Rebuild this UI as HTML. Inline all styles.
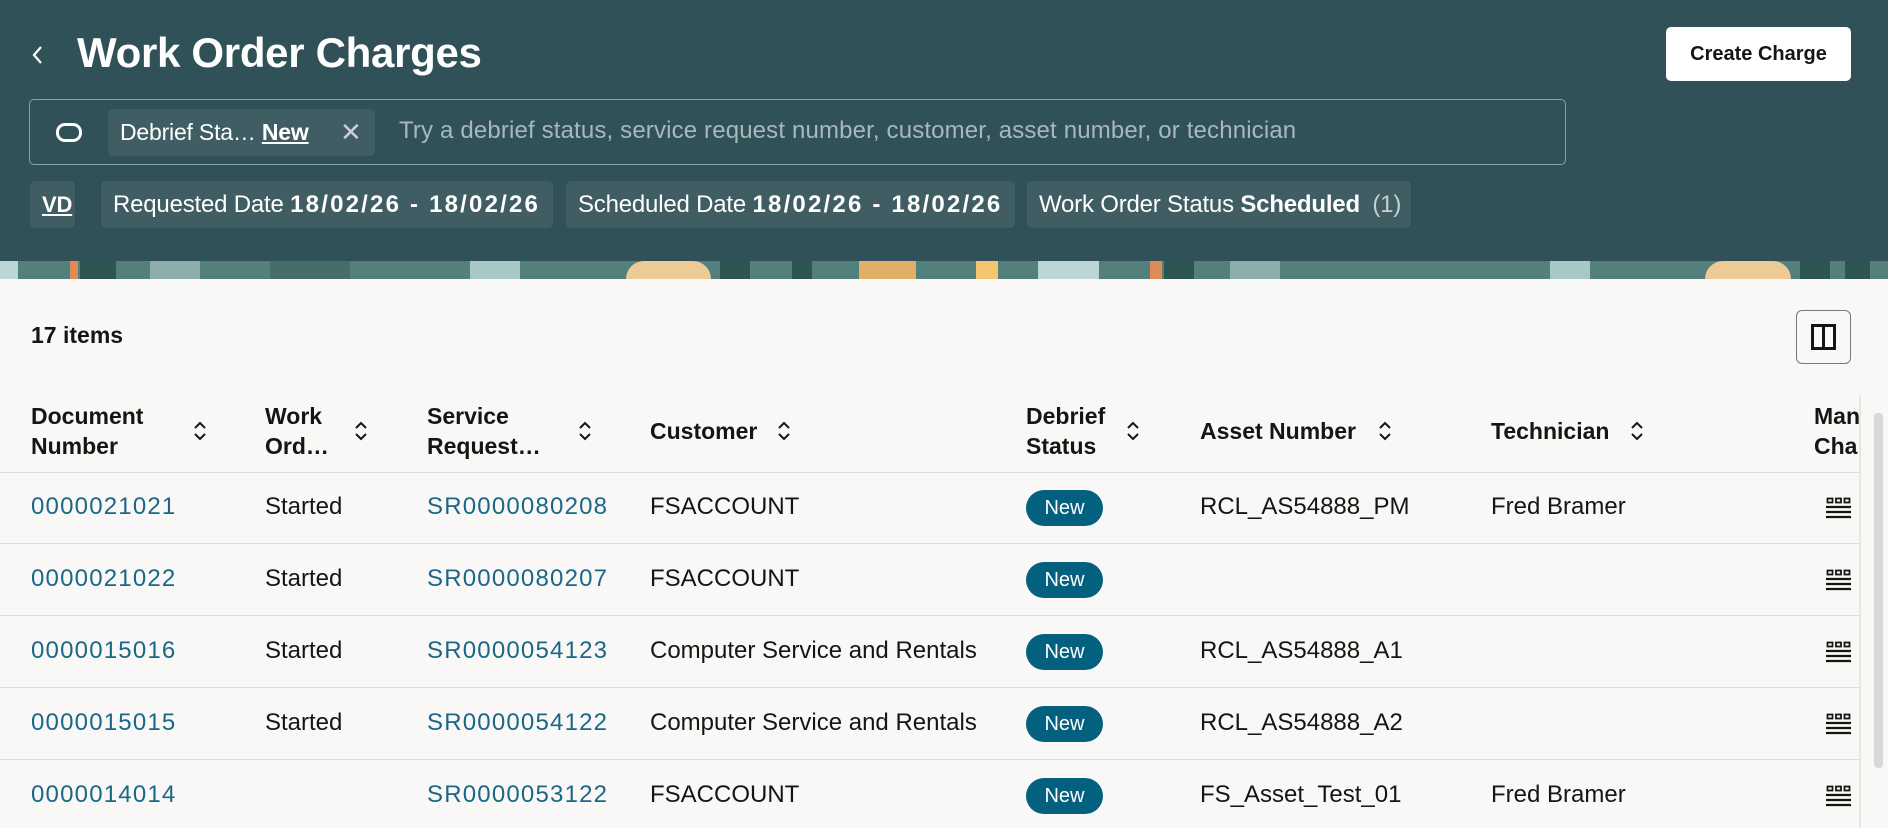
<!DOCTYPE html>
<html><head><meta charset="utf-8"><style>
*{box-sizing:border-box;margin:0;padding:0}
body{width:1888px;height:828px;overflow:hidden;background:#f9f8f6;font-family:"Liberation Sans",sans-serif;position:relative;color:#161513}
.hdr{position:absolute;left:0;top:0;width:1888px;height:261px;background:#315158}
.band{position:absolute;left:0;top:261px;width:1888px;height:18px;background:#53807d;overflow:hidden}
.band div{position:absolute;top:0;height:18px}
.abs{position:absolute}
.title{left:77px;top:29px;font-size:42px;font-weight:bold;color:#fff;letter-spacing:-0.3px}
.btn{left:1666px;top:27px;width:185px;height:54px;background:#fff;border-radius:5px;font-size:20px;color:#161513;text-align:center;line-height:54px;font-weight:bold}
.search{left:29px;top:99px;width:1537px;height:66px;border:1px solid #8aa0a3;border-radius:5px}
.chip{background:#3f5d62;border-radius:5px;color:#fff;font-size:24px;height:47px;line-height:47px;padding:0 12px;white-space:nowrap;letter-spacing:-0.2px}
.chip b.d{letter-spacing:2.2px}
.th{font-size:23px;font-weight:bold;line-height:30px}
.td{font-size:24px;position:absolute}
.lnk{color:#1a6788;letter-spacing:1.2px}
.line{position:absolute;left:0;width:1860px;height:1px;background:#dedcda}
.badge{position:absolute;left:1026px;width:77px;height:36px;border-radius:18px;background:#04607f;color:#fff;font-size:20px;text-align:center;line-height:36px}
.sort{position:absolute;width:14px;height:22px}
.grid{position:absolute;left:1826px;width:25px;height:22px}
</style></head><body>
<div class="hdr"></div>
<div class="band">
<div style="left:0;width:18px;background:#bcd5d6"></div>
<div style="left:70px;width:8px;background:#e08a55"></div>
<div style="left:80px;width:36px;background:#2f5553"></div>
<div style="left:150px;width:50px;background:#8eaeab"></div>
<div style="left:270px;width:80px;background:#476d69"></div>
<div style="left:470px;width:50px;background:#a8c7c7"></div>
<div style="left:626px;width:85px;background:#edca96;border-radius:20px 20px 0 0"></div>
<div style="left:720px;width:30px;background:#2f5553"></div>
<div style="left:792px;width:20px;background:#2f5553"></div>
<div style="left:859px;width:57px;background:#e0b068"></div>
<div style="left:976px;width:22px;background:#f3c670"></div>
<div style="left:1038px;width:61px;background:#bcd5d6"></div>
<div style="left:1150px;width:12px;background:#e08a55"></div>
<div style="left:1164px;width:30px;background:#2f5553"></div>
<div style="left:1230px;width:50px;background:#8eaeab"></div>
<div style="left:1550px;width:40px;background:#a8c7c7"></div>
<div style="left:1705px;width:86px;background:#edca96;border-radius:20px 20px 0 0"></div>
<div style="left:1800px;width:30px;background:#2f5553"></div>
<div style="left:1845px;width:25px;background:#2f5553"></div>
</div>
<svg class="abs" style="left:30px;top:44px" width="16" height="22"><path d="M11 3 L4 11 L11 19" stroke="#fff" stroke-width="2.2" fill="none"/></svg>
<div class="abs title">Work Order Charges</div>
<div class="abs btn">Create Charge</div>
<div class="abs search"></div>
<div class="abs" style="left:56px;top:123px;width:26px;height:19px;border:3px solid #fff;border-radius:9px"></div>
<div class="abs chip" style="left:108px;top:109px;width:267px;height:47px;font-size:23px">Debrief Sta… <b style="text-decoration:underline">New</b><span style="position:absolute;left:232px;font-size:26px;color:#ccd">✕</span></div>
<div class="abs" style="left:399px;top:117px;font-size:24px;color:#a9b8ba;letter-spacing:0.15px">Try a debrief status, service request number, customer, asset number, or technician</div>
<div class="abs chip" style="left:30px;top:181px;width:45px;padding:0 12px;text-decoration:underline;font-weight:bold;font-size:22px">VD</div>
<div class="abs chip" style="left:101px;top:181px;width:452px">Requested Date <b class="d">18/02/26 - 18/02/26</b></div>
<div class="abs chip" style="left:566px;top:181px;width:449px">Scheduled Date <b class="d">18/02/26 - 18/02/26</b></div>
<div class="abs chip" style="left:1027px;top:181px;width:384px">Work Order Status <b>Scheduled</b> <span style="color:#c4d0d1;margin-left:6px">(1)</span></div>

<div class="abs" style="left:31px;top:322px;font-size:23px;font-weight:bold">17 items</div>
<div class="abs" style="left:1796px;top:310px;width:55px;height:54px;border:1px solid #7a7876;border-radius:6px"></div>
<div class="abs" style="left:1811px;top:324px;width:25px;height:26px;border:3px solid #161513"></div>
<div class="abs" style="left:1822px;top:324px;width:3px;height:26px;background:#161513"></div>

<div class="abs th" style="left:31px;top:401px">Document<br>Number</div>
<div class="abs th" style="left:265px;top:401px">Work<br>Ord…</div>
<div class="abs th" style="left:427px;top:401px">Service<br>Request…</div>
<div class="abs th" style="left:650px;top:416px">Customer</div>
<div class="abs th" style="left:1026px;top:401px">Debrief<br>Status</div>
<div class="abs th" style="left:1200px;top:416px">Asset Number</div>
<div class="abs th" style="left:1491px;top:416px">Technician</div>
<div class="abs th" style="left:1814px;top:401px;width:46px;overflow:hidden">Manual<br>Charge</div>
<svg width="0" height="0"><defs><symbol id="s" viewBox="0 0 14 22"><path d="M2 8 L7 3 L12 8 M2 14 L7 19 L12 14" stroke="#161513" stroke-width="2" fill="none"/></symbol>
<symbol id="g" viewBox="0 0 25 22"><path d="M1.5 1.5h5v4h-5zM10 1.5h5v4h-5zM18.5 1.5h5v4h-5z" fill="none" stroke="#161513" stroke-width="1.8"/><path d="M0 10h25M0 15h25M0 20h25" stroke="#161513" stroke-width="2.2"/></symbol></defs></svg>
<svg class="sort" style="left:193px;top:420px"><use href="#s"/></svg>
<svg class="sort" style="left:354px;top:420px"><use href="#s"/></svg>
<svg class="sort" style="left:578px;top:420px"><use href="#s"/></svg>
<svg class="sort" style="left:777px;top:420px"><use href="#s"/></svg>
<svg class="sort" style="left:1126px;top:420px"><use href="#s"/></svg>
<svg class="sort" style="left:1378px;top:420px"><use href="#s"/></svg>
<svg class="sort" style="left:1630px;top:420px"><use href="#s"/></svg>

<div class="line" style="top:472px"></div>
<div class="line" style="top:543px"></div>
<div class="line" style="top:615px"></div>
<div class="line" style="top:687px"></div>
<div class="line" style="top:759px"></div>
<div class="abs" style="left:1859px;top:395px;width:2px;height:433px;background:#e8e6e3"></div>
<div class="abs" style="left:1874px;top:413px;width:9px;height:355px;background:#d9d8d6;border-radius:4px"></div>

<div class="td lnk" style="left:31px;top:493px">0000021021</div><div class="td" style="left:265px;top:493px">Started</div><div class="td lnk" style="left:427px;top:493px">SR0000080208</div><div class="td" style="left:650px;top:493px">FSACCOUNT</div><div class="badge" style="top:490px">New</div><div class="td" style="left:1200px;top:493px">RCL_AS54888_PM</div><div class="td" style="left:1491px;top:493px">Fred Bramer</div><svg class="grid" style="top:497px"><use href="#g"/></svg>
<div class="td lnk" style="left:31px;top:565px">0000021022</div><div class="td" style="left:265px;top:565px">Started</div><div class="td lnk" style="left:427px;top:565px">SR0000080207</div><div class="td" style="left:650px;top:565px">FSACCOUNT</div><div class="badge" style="top:562px">New</div><svg class="grid" style="top:569px"><use href="#g"/></svg>
<div class="td lnk" style="left:31px;top:637px">0000015016</div><div class="td" style="left:265px;top:637px">Started</div><div class="td lnk" style="left:427px;top:637px">SR0000054123</div><div class="td" style="left:650px;top:637px">Computer Service and Rentals</div><div class="badge" style="top:634px">New</div><div class="td" style="left:1200px;top:637px">RCL_AS54888_A1</div><svg class="grid" style="top:641px"><use href="#g"/></svg>
<div class="td lnk" style="left:31px;top:709px">0000015015</div><div class="td" style="left:265px;top:709px">Started</div><div class="td lnk" style="left:427px;top:709px">SR0000054122</div><div class="td" style="left:650px;top:709px">Computer Service and Rentals</div><div class="badge" style="top:706px">New</div><div class="td" style="left:1200px;top:709px">RCL_AS54888_A2</div><svg class="grid" style="top:713px"><use href="#g"/></svg>
<div class="td lnk" style="left:31px;top:781px">0000014014</div><div class="td lnk" style="left:427px;top:781px">SR0000053122</div><div class="td" style="left:650px;top:781px">FSACCOUNT</div><div class="badge" style="top:778px">New</div><div class="td" style="left:1200px;top:781px">FS_Asset_Test_01</div><div class="td" style="left:1491px;top:781px">Fred Bramer</div><svg class="grid" style="top:785px"><use href="#g"/></svg>
</body></html>
